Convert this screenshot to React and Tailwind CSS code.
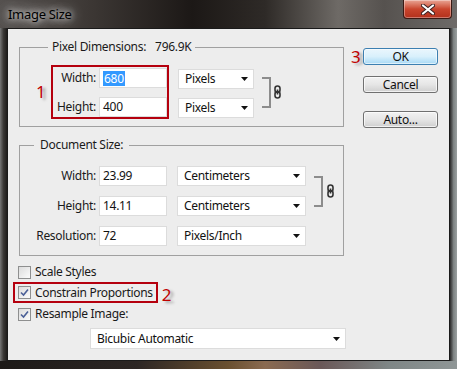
import React from 'react'

const font = "font-['Noto_Sans',sans-serif] tracking-[-0.3px]"

function Arrow() {
  return (
    <svg width="7" height="4" viewBox="0 0 7 4" className="shrink-0">
      <path d="M0 0H7L3.5 4Z" fill="#111" />
    </svg>
  )
}

function Input({ value, selected }) {
  return (
    <div className="w-[68px] h-[20px] bg-white border border-[#dcdcdc] flex items-center pl-[3px] text-[12px] text-[#111]">
      {selected ? <span className="bg-[#3399ff] text-white leading-[15px] px-[1px]">{value}</span> : value}
    </div>
  )
}

function Select({ value, className }) {
  return (
    <div className={`h-[20px] bg-white border border-[#dcdcdc] flex items-center justify-between pl-[6px] pr-[5px] text-[12px] text-[#111] ${className}`}>
      <span>{value}</span>
      <Arrow />
    </div>
  )
}

function Chain() {
  return (
    <svg width="7" height="14" viewBox="0 0 7 14" className="shrink-0">
      <rect x="1" y="1" width="5" height="6.5" rx="2.5" fill="none" stroke="#333" strokeWidth="1.6" />
      <rect x="1" y="6.5" width="5" height="6.5" rx="2.5" fill="none" stroke="#333" strokeWidth="1.6" />
      <path d="M3.5 4.5V9.5" stroke="#333" strokeWidth="1.6" />
    </svg>
  )
}

function Bracket() {
  return <div className="w-[9px] h-[31px] border-2 border-l-0 border-[#8c8c8c] shrink-0" />
}

function Check({ checked }) {
  return (
    <div className="w-[13px] h-[13px] border border-[#8e8f8f] bg-gradient-to-br from-[#dcdcdc] to-[#fbfbfb] flex items-center justify-center shrink-0">
      {checked && (
        <svg width="9" height="9" viewBox="0 0 9 9">
          <path d="M1 4.5L3.5 7L8 1.5" fill="none" stroke="#4a5f97" strokeWidth="1.6" />
        </svg>
      )}
    </div>
  )
}

function Button({ children, primary, className }) {
  return (
    <div
      className={`w-[75px] h-[17px] rounded-[3px] border flex items-center justify-center text-[12px] text-[#111] ${
        primary
          ? 'border-[#3c7fb1] bg-gradient-to-b from-[#eaf6fd] via-[#d9f0fc] to-[#a7d9f5] shadow-[inset_0_0_0_1px_rgba(255,255,255,0.6)]'
          : 'border-[#707070] bg-gradient-to-b from-[#f2f2f2] via-[#e6e6e6] to-[#cfcfcf] shadow-[inset_0_0_0_1px_rgba(255,255,255,0.7)]'
      } ${className}`}
    >
      {children}
    </div>
  )
}

const mark = 'text-[#c00000] text-[17px] leading-none tracking-normal [text-shadow:3px_2px_3px_rgba(0,0,0,0.35)]'

export default function App() {
  return (
    <div className={`w-[457px] h-[369px] flex flex-col overflow-hidden bg-[linear-gradient(90deg,#55514f_0%,#3c3734_20%,#1c1816_42%,#2e2a27_58%,#6e6a66_74%,#56524f_84%,#6d6a68_100%)] ${font}`}>
      {/* title bar */}
      <div className="h-[28px] shrink-0 flex items-start justify-between pl-[8px] pr-[5px]">
        <span className="mt-[5px] text-[13px] text-black [text-shadow:0_0_6px_rgba(255,255,255,0.95),0_0_12px_rgba(255,255,255,0.8),0_0_18px_rgba(255,255,255,0.5)]">Image Size</span>
        <div className="w-[49px] h-[19px] rounded-b-[4px] border border-t-0 border-[#3a1a14] bg-gradient-to-b from-[#e8a595] via-[#c9452d] to-[#b3301c] flex items-center justify-center shadow-[inset_0_0_0_1px_rgba(255,255,255,0.35)]">
          <svg width="14" height="11" viewBox="0 0 14 11">
            <path d="M2 1.5L12 9.5M12 1.5L2 9.5" stroke="#3a2020" strokeWidth="4" strokeLinecap="round" />
            <path d="M2 1.5L12 9.5M12 1.5L2 9.5" stroke="#fff" strokeWidth="2.2" strokeLinecap="round" />
          </svg>
        </div>
      </div>

      <div className="flex h-[333px] shrink-0">
        <div className="w-[7px] shrink-0 bg-gradient-to-r from-[#777] via-[#3a3836] to-[#1f1d1c]" />
        {/* client area */}
        <div className="w-[443px] shrink-0 border border-[#1a1a1a] bg-[#ededed] flex pt-[10px] pl-[10px] text-[12px] text-[#1a1a1a]">
          <div className="w-[328px] flex flex-col">
            {/* pixel dimensions */}
            <fieldset className="ml-[1px] w-[325px] border border-[#a0a0a0] pl-[16px] pt-[10px] pb-[7px]">
              <legend className="ml-[12px] px-[4px] leading-[16px]">
                Pixel Dimensions:<span className="ml-[9px]">796.9K</span>
              </legend>
              <div className="flex items-center">
                <span className={`${mark} w-[7px] -mt-[2px]`}>1</span>
                <div className="ml-[8px] border-2 border-[#b5000e] pt-[1px] flex flex-col gap-[9px]">
                  <div className="flex items-center gap-[3px]">
                    <span className="w-[43px] text-right">Width:</span>
                    <Input value="680" selected />
                  </div>
                  <div className="flex items-center gap-[3px]">
                    <span className="w-[43px] text-right">Height:</span>
                    <Input value="400" />
                  </div>
                </div>
                <div className="ml-[9px] mt-[2px] flex flex-col gap-[9px]">
                  <Select value="Pixels" className="w-[76px]" />
                  <Select value="Pixels" className="w-[76px]" />
                </div>
                <div className="ml-[8px] mt-[1px]"><Bracket /></div>
                <div className="ml-[3px]"><Chain /></div>
              </div>
            </fieldset>

            {/* document size */}
            <fieldset className="ml-[1px] mt-[10px] w-[325px] border border-[#a0a0a0] pt-[13px] pb-[9px]">
              <legend className="ml-[14px] px-[6px] leading-[16px]">Document Size:</legend>
              <div className="flex flex-col gap-[10px]">
                <div className="flex items-center">
                  <div className="flex flex-col gap-[10px]">
                    <div className="flex items-center gap-[3px]">
                      <span className="w-[76px] text-right">Width:</span>
                      <Input value="23.99" />
                      <Select value="Centimeters" className="ml-[7px] w-[129px]" />
                    </div>
                    <div className="flex items-center gap-[3px]">
                      <span className="w-[76px] text-right">Height:</span>
                      <Input value="14.11" />
                      <Select value="Centimeters" className="ml-[7px] w-[129px]" />
                    </div>
                  </div>
                  <div className="ml-[8px]"><Bracket /></div>
                  <div className="ml-[4px]"><Chain /></div>
                </div>
                <div className="flex items-center gap-[3px]">
                  <span className="w-[76px] text-right">Resolution:</span>
                  <Input value="72" />
                  <Select value="Pixels/Inch" className="ml-[7px] w-[129px]" />
                </div>
              </div>
            </fieldset>

            {/* options */}
            <div className="mt-[8px] h-[16px] flex items-center gap-[4px]">
              <Check />
              <span>Scale Styles</span>
            </div>
            <div className="mt-[2px] flex items-center">
              <div className="-ml-[5px] border-2 border-[#b5000e] py-[2px] pl-[3px] pr-[3px] flex items-center gap-[4px]">
                <Check checked />
                <span className="leading-[13px]">Constrain Proportions</span>
              </div>
              <span className={`${mark} ml-[4px] mt-[3px]`}>2</span>
            </div>
            <div className="mt-[3px] h-[16px] flex items-center gap-[4px]">
              <Check checked />
              <span>Resample Image:</span>
            </div>
            <Select value="Bicubic Automatic" className="mt-[6px] ml-[72px] w-[256px] h-[21px]" />
          </div>

          {/* buttons */}
          <div className="ml-[3px] pt-[9px] flex flex-col">
            <div className="flex items-center">
              <span className={`${mark} w-[14px] pl-[2px] -mt-[1px]`}>3</span>
              <Button primary>OK</Button>
            </div>
            <Button className="ml-[14px] mt-[11px]">Cancel</Button>
            <Button className="ml-[14px] mt-[18px]">Auto...</Button>
          </div>
        </div>
        <div className="w-[7px] shrink-0 bg-gradient-to-r from-[#2a2a2a] via-[#7d8282] to-[#9aa0a0]" />
      </div>

      <div className="h-[8px] shrink-0 bg-[linear-gradient(90deg,#1d1a18_0%,#2c2624_30%,#6a5030_50%,#8a6a50_58%,#6a5858_70%,#7e8686_85%,#8f9696_100%)]" />
    </div>
  )
}
